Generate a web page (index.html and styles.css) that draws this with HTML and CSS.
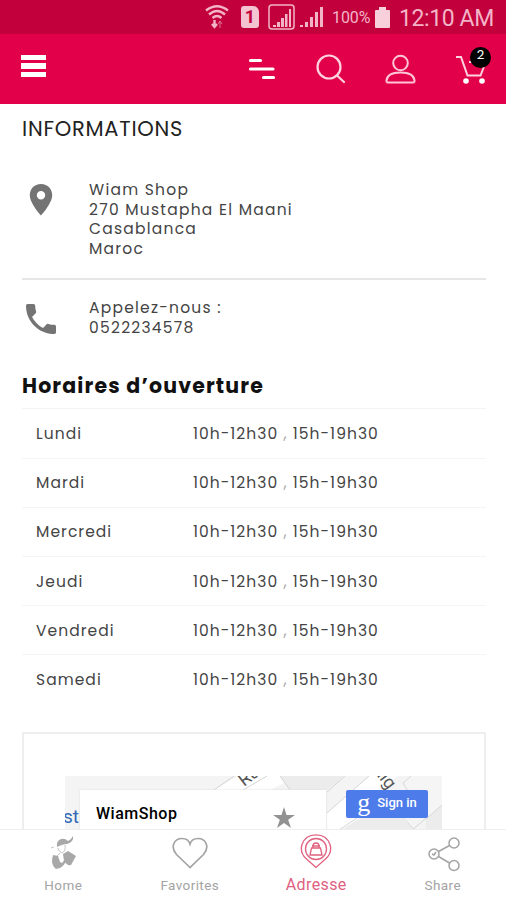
FILE: index.html
```html
<!DOCTYPE html>
<html lang="fr">
<head>
  <meta charset="UTF-8">
  <meta name="viewport" content="width=device-width, initial-scale=1">
  <title>Wiam Shop - Adresse</title>
  <link rel="stylesheet" href="styles.css">
</head>
<body>
  <div class="app">
    <div class="statusbar">
      <svg class="wifi" width="24" height="24" viewBox="0 0 24 24" fill="none" stroke="currentColor" stroke-width="2.4">
        <path d="M1 5.500Q12-3 23 5.500M4 9.500Q12 2.500 20 9.500M7.500 13Q12 9 16.500 13" />
        <path d="M9.500 15v6M7 19l2.500 3 2.500-3" />
        <path d="M15 23v-6M13 19l2-3 2 3" stroke-width="1" opacity=".6" />
      </svg>
      <div class="sim">1</div>
      <svg class="signal-box" width="27" height="26" viewBox="0 0 27 26">
        <rect x="1" y="1" width="25" height="24" rx="3" fill="none" stroke="currentColor" stroke-width="1.500" />
        <path d="M5 21h3v2H5zM9 18h3v5H9zM13 14h3v9h-3zM17 10h2.500v13H17zM21 5h2v18h-2z" fill="currentColor" />
      </svg>
      <svg class="signal" width="24" height="22" viewBox="0 0 24 22" fill="currentColor">
        <path d="M0 19h3v2H0zM5 16h3v5H5zM10 11h3v10h-3zM15 6h3v15h-3zM20 1h3v20h-3z" />
      </svg>
      <span class="percent">100%</span>
      <svg class="battery" width="15" height="21" viewBox="0 0 15 21" fill="currentColor">
        <path d="M4 0h7v3h3q1 0 1 1v16q0 1-1 1H1q-1 0-1-1V4q0-1 1-1h3z" />
      </svg>
      <span class="clock">12:10 AM</span>
    </div>

    <header class="header">
      <button class="menu" aria-label="Menu">
        <span></span><span></span><span></span>
      </button>
      <div class="actions">
        <svg width="28" height="24" viewBox="0 0 28 24" stroke="#fff" stroke-width="3.200" stroke-linecap="round">
          <path d="M2.500 3.500h10M2.500 12h22.500M15.500 20.500h10" />
        </svg>
        <svg width="31" height="30" viewBox="0 0 31 30" fill="none" stroke="#ffd2df" stroke-width="2.200" stroke-linecap="round">
          <circle cx="14" cy="13" r="11.500" />
          <path d="M22 21.500l7 6.500" />
        </svg>
        <svg width="31" height="30" viewBox="0 0 31 30" fill="none" stroke="#ffc5d6" stroke-width="2">
          <circle cx="15.500" cy="9" r="7.300" />
          <path d="M3 28.500q-1.700 0-1.500-2C2 21 7.500 18.500 15.500 18.500s13.500 2.500 14 8q.2 2-1.500 2z" />
        </svg>
        <div class="cart">
          <svg width="31" height="30" viewBox="0 0 31 30" fill="none" stroke="#ffd2df" stroke-width="2">
            <path d="M1 3h5l6.500 18.500h13L30 10M14 8h16" />
            <circle cx="11" cy="27" r="2.800" fill="#fff" stroke="none" />
            <circle cx="27" cy="27" r="2.800" fill="#fff" stroke="none" />
          </svg>
          <span class="badge">2</span>
        </div>
      </div>
    </header>

    <main class="content">
      <h1>INFORMATIONS</h1>

      <div class="info address">
        <svg class="pin" width="24" height="32" viewBox="0 0 24 32">
          <path fill="#747474" fill-rule="evenodd" d="M12 0C5 0 .8 5 .8 11.300.8 19.500 12 31.500 12 31.500s11.200-12 11.200-20.200C23.200 5 19 0 12 0zm0 7a4.200 4.200 0 1 1 0 8.400A4.200 4.200 0 0 1 12 7z" />
        </svg>
        <p>Wiam Shop<br>270 Mustapha El Maani<br>Casablanca<br>Maroc</p>
      </div>

      <div class="info phone">
        <svg width="30" height="30" viewBox="3 3 18 18">
          <path fill="#747474" d="M6.620 10.790c1.440 2.830 3.760 5.140 6.590 6.590l2.200-2.200c.27-.27.67-.36 1.020-.24 1.120.37 2.330.57 3.570.57.55 0 1 .45 1 1V20c0 .55-.45 1-1 1-9.390 0-17-7.610-17-17 0-.55.45-1 1-1h3.500c.55 0 1 .45 1 1 0 1.250.2 2.450.57 3.570.11.35.03.74-.25 1.020l-2.200 2.200z" />
        </svg>
        <p>Appelez-nous :<br>0522234578</p>
      </div>

      <h2>Horaires d’ouverture</h2>

      <div class="hours">
        <div class="day"><span>Lundi</span><span class="time">10h-12h30 <i>,</i> 15h-19h30</span></div>
        <div class="day"><span>Mardi</span><span class="time">10h-12h30 <i>,</i> 15h-19h30</span></div>
        <div class="day"><span>Mercredi</span><span class="time">10h-12h30 <i>,</i> 15h-19h30</span></div>
        <div class="day"><span>Jeudi</span><span class="time">10h-12h30 <i>,</i> 15h-19h30</span></div>
        <div class="day"><span>Vendredi</span><span class="time">10h-12h30 <i>,</i> 15h-19h30</span></div>
        <div class="day"><span>Samedi</span><span class="time">10h-12h30 <i>,</i> 15h-19h30</span></div>
      </div>

      <div class="map-box">
        <div class="map">
          <svg class="streets" width="377" height="54" viewBox="0 0 377 54">
            <rect width="377" height="54" fill="#f4f4f4" />
            <path d="M149 14L173 0H233L205 14zM262 37L304 0H332L320 10 342 54H262z" fill="#fff" />
            <path d="M149 14L169 0M178 14L202 0M262 16L280 0M262 37L304 0M274 54L301 36M347 54L377 29M338 41L349 54" fill="none" stroke="#d5d5d5" />
            <path d="M215 0H280L262 14H225z" fill="#ececec" />
            <path d="M215 0L225 14" stroke="#d5d5d5" />
            <path d="M276 54L300 39H338L347 54zM361 54V43L377 29V54z" fill="#ececec" />
            <path d="M346 0L338 7 361 43 377 29V0z" fill="#f5f5f5" />
            <path d="M346 0L338 7 361 43 377 29" fill="none" stroke="#d8d8d8" />
            <text class="street" transform="translate(179 11) rotate(-37)">Ru</text>
            <text class="street" transform="translate(308 -5) rotate(52)">aig</text>
          </svg>
          <span class="station">str</span>
          <div class="place">
            <span>WiamShop</span>
            <svg width="22" height="22" viewBox="0 0 22 22">
              <path fill="#929292" d="M11 0l2.500 8H22l-6.800 4.800L18 21l-7-5-7 5 2.800-8.200L0 8h8.500z" />
            </svg>
          </div>
          <div class="signin"><b>g</b><span>Sign in</span></div>
        </div>
      </div>
    </main>

    <nav class="tabs">
      <a class="tab">
        <svg width="28" height="34" viewBox="0 0 28 34" fill="#a8a8a8">
          <path d="M8 11q-1-6 4-8 4-1 7 2 3-1 5-5 1 6-6 8-4 0-10 3z" />
          <path d="M2 12l3-1M9 12q1 4 4 5 4-2 3-8M11 17l-4 4" fill="none" stroke="#b8b8b8" stroke-width=".8" />
          <path d="M4 19l5 1 2 6 2 1 4-5q0 7-6 10l-4 1q-3-2-4-7 0-4 1-7z" />
          <path d="M14 18l5-3 8 5-5 9q-4 1-7-4z" />
        </svg>
        <span>Home</span>
      </a>
      <a class="tab">
        <svg width="36" height="34" viewBox="0 0 36 34" fill="none" stroke="#a3a3a3" stroke-width="1.700">
          <path d="M18 31.500L4.500 18.500C-2 11 2 2.500 10 2.500c4 0 7 2 8 5.500 1-3.500 4-5.500 8-5.500 8 0 12 8.500 5.500 16z" />
        </svg>
        <span>Favorites</span>
      </a>
      <a class="tab active">
        <svg width="32" height="36" viewBox="0 0 32 36" fill="none" stroke="#e0617f" stroke-width="1.300">
          <path d="M16 33.500L6 24.500C1 20 1 14 2 10.500 4 4.500 9 .8 16 .8s12 3.700 14 9.700c1 3.500 1 9.500-4 14z" />
          <circle cx="16" cy="15" r="10.500" />
          <path d="M11.500 14h9l1.500 7H10zM13 14v-2q0-3 3-3t3 3v2M12 12h8" />
        </svg>
        <span>Adresse</span>
      </a>
      <a class="tab">
        <svg width="34" height="36" viewBox="0 0 34 36" fill="none" stroke="#a3a3a3" stroke-width="1.500">
          <circle cx="28" cy="7" r="5" />
          <circle cx="8" cy="18" r="5" />
          <circle cx="28" cy="29.500" r="5" />
          <path d="M12.500 15.500L23.500 9.500M12.500 20.500L23.500 27M6 18l2 1 2-3" />
        </svg>
        <span>Share</span>
      </a>
    </nav>
  </div>
</body>
</html>
```
FILE: styles.css
```css
* {
  box-sizing: border-box;
}

body {
  margin: 0;
  background: #fff;
  font-family: Poppins, Inter, sans-serif;
  color: #333;
}

svg {
  display: block;
  flex-shrink: 0;
}

.app {
  height: 900px;
  display: flex;
  flex-direction: column;
  overflow: hidden;
}

.statusbar {
  height: 34px;
  flex-shrink: 0;
  background: #c1003c;
  color: #f3b4c7;
  display: flex;
  align-items: center;
  padding-left: 205px;
  font-family: Roboto, sans-serif;
  white-space: nowrap;
}

.sim {
  width: 18px;
  height: 22px;
  margin: 0 9px 0 12px;
  background: #f3c3d1;
  color: #c1003c;
  border-radius: 3px 6px 3px 3px;
  font-size: 18px;
  font-weight: bold;
  line-height: 22px;
  text-align: center;
}

.signal {
  margin-left: 5px;
}

.percent {
  width: 39px;
  margin-left: 8px;
  font-size: 16px;
  letter-spacing: -0.1px;
}

.battery {
  margin: 0 9px 0 4px;
  color: #f8d0dc;
}

.clock {
  font-size: 23px;
  letter-spacing: -0.4px;
  padding-top: 3px;
}

.header {
  height: 70px;
  flex-shrink: 0;
  background: #e2004a;
  display: flex;
  justify-content: space-between;
  padding: 20px 20px 0 21px;
}

.menu {
  display: flex;
  flex-direction: column;
  gap: 3px;
  width: 25px;
  height: 24px;
  padding: 1px 0;
  border: none;
  background: none;
}

.menu span {
  height: 5.500px;
  width: 25px;
  background: #fff;
}

.actions {
  display: flex;
  align-items: center;
  height: 30px;
  gap: 39px;
}

.cart {
  position: relative;
}

.badge {
  position: absolute;
  top: -7px;
  right: -5px;
  width: 21px;
  height: 21px;
  border-radius: 50%;
  background: #000;
  color: #fff;
  font-size: 13px;
  line-height: 15px;
  text-align: center;
}

.content {
  flex: 1;
  min-height: 0;
  overflow: hidden;
  padding: 0 20px 0 22px;
}

h1 {
  margin: 10px 0 0;
  font-size: 21px;
  font-weight: 400;
  line-height: 30px;
  letter-spacing: 0.750px;
  color: #222;
}

.info {
  display: flex;
  font-size: 15.500px;
  line-height: 19.700px;
  letter-spacing: 1.250px;
  color: #444;
}

.info p {
  margin: 0;
}

.address {
  height: 136px;
  padding-top: 36px;
  border-bottom: 2px solid #e6e6e6;
}

.address svg {
  margin: 4px 36px 0 7px;
}

.phone {
  padding-top: 18px;
}

.phone svg {
  margin: 6px 33px 0 4px;
}

h2 {
  margin: 34px 0 7px;
  font-size: 20.500px;
  font-weight: 700;
  line-height: 30px;
  letter-spacing: 1.150px;
  color: #111;
}

.day {
  height: 49.200px;
  padding: 0 14px;
  display: grid;
  grid-template-columns: 157px 1fr;
  align-items: center;
  border-top: 1px solid #f4f4f4;
  font-size: 15.500px;
  letter-spacing: 1.050px;
  color: #444;
}

.time i {
  font-style: normal;
  color: #aaa;
}

.map-box {
  height: 180px;
  margin-top: 28px;
  padding: 42px 42px 0 41px;
  border: 2px solid #eee;
}

.map {
  position: relative;
  height: 100px;
  overflow: hidden;
}

.street {
  font: 18px Roboto, sans-serif;
  fill: #555;
}

.station {
  position: absolute;
  left: -2px;
  top: 29px;
  font: 19px Roboto, sans-serif;
  color: #3268b5;
}

.place {
  position: absolute;
  left: 15px;
  top: 14px;
  width: 246px;
  height: 80px;
  padding: 15px 31px 0 16px;
  background: #fff;
  box-shadow: 0 0 2px #ddd;
  display: flex;
  justify-content: space-between;
  font: 500 16px/18px Roboto, sans-serif;
  letter-spacing: 0.5px;
  color: #000;
}

.place svg {
  margin-top: 2px;
}

.signin {
  position: absolute;
  left: 281px;
  top: 14px;
  width: 82px;
  height: 28px;
  background: #4d7bea;
  border-radius: 2px;
  color: #fff;
  display: flex;
  align-items: center;
  justify-content: center;
  gap: 7px;
  padding-bottom: 2px;
  font: 500 13px Roboto, sans-serif;
}

.signin b {
  font: 26px/22px "Liberation Serif", serif;
}

.tabs {
  height: 71px;
  flex-shrink: 0;
  display: grid;
  grid-template-columns: repeat(4, 1fr);
  border-top: 1px solid #eee;
  background: #fff;
}

.tab {
  display: flex;
  flex-direction: column;
  align-items: center;
  justify-content: space-between;
  padding: 6px 0 7px;
  font: 13.500px/16px Roboto, sans-serif;
  letter-spacing: 0.4px;
  color: #a3a3a3;
}

.active {
  padding: 4px 0 7px;
  font-size: 16px;
  color: #e0617f;
}
```
